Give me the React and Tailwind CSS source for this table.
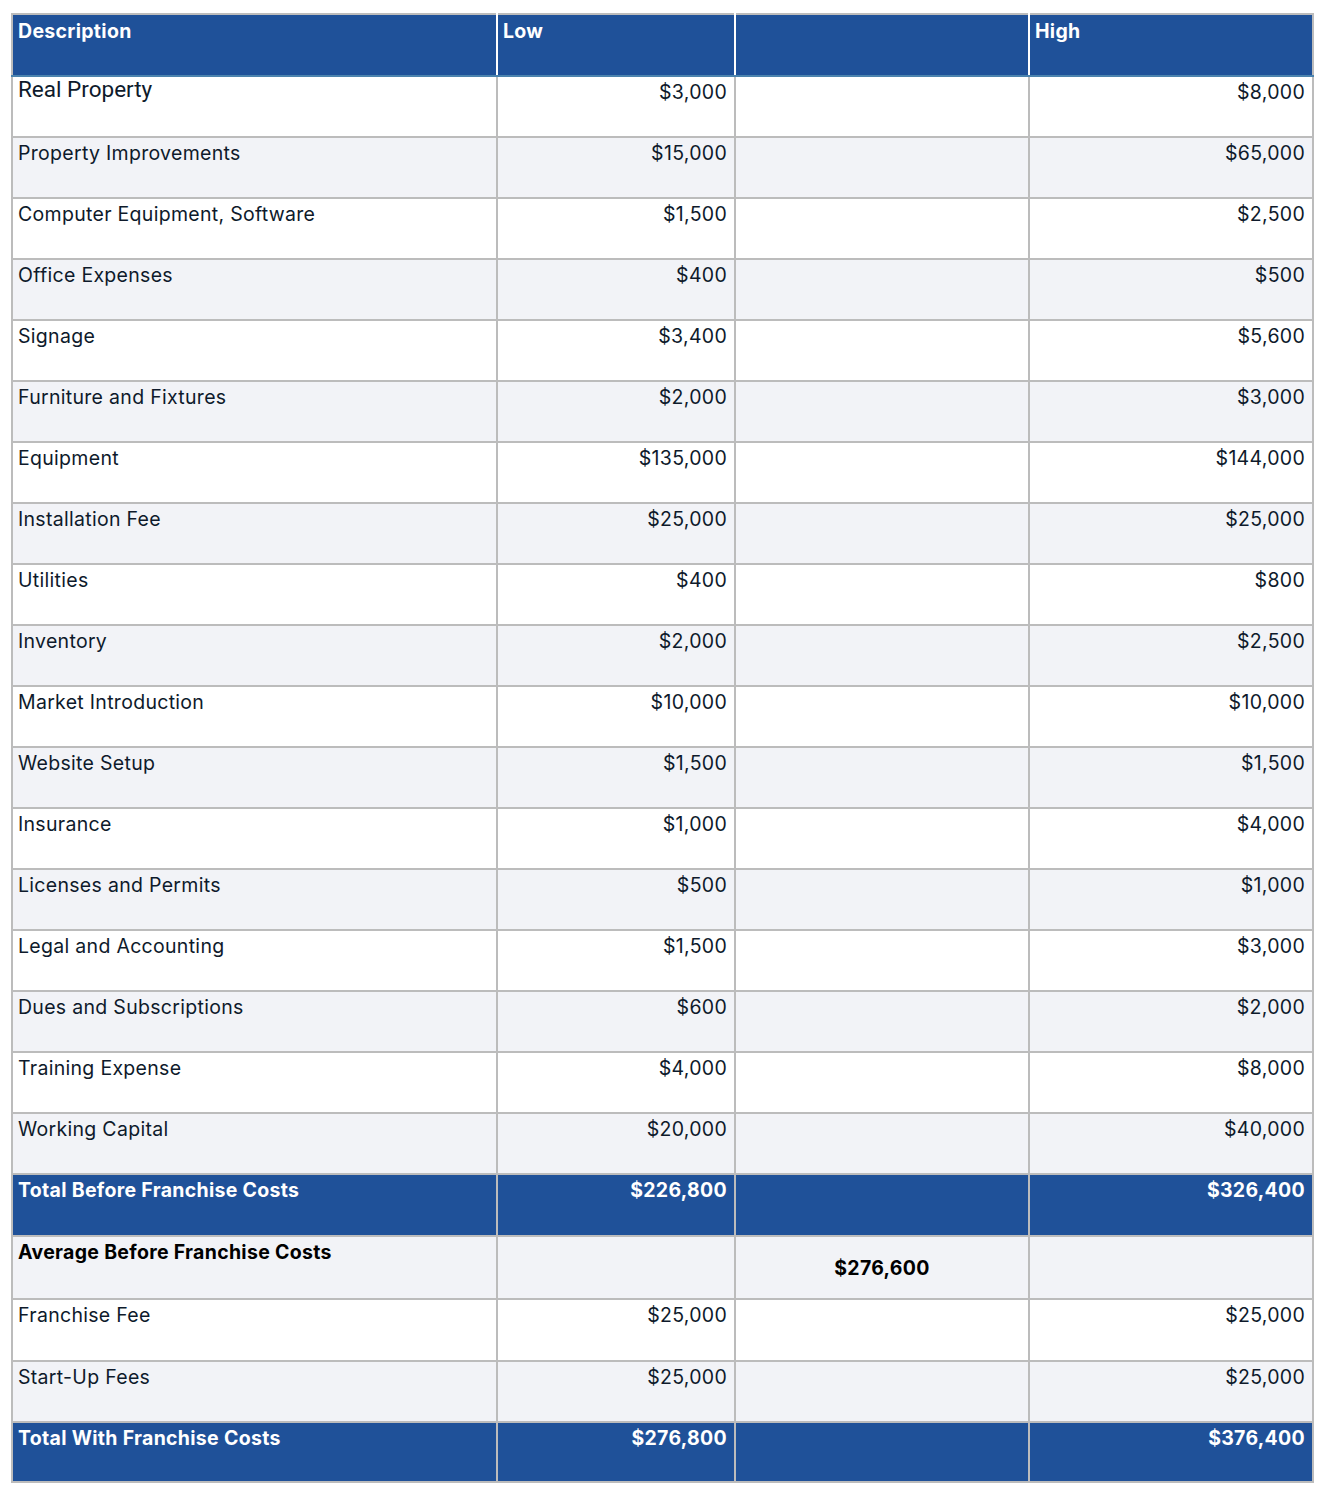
const rows = [
  ['Real Property', '$3,000', '$8,000'],
  ['Property Improvements', '$15,000', '$65,000'],
  ['Computer Equipment, Software', '$1,500', '$2,500'],
  ['Office Expenses', '$400', '$500'],
  ['Signage', '$3,400', '$5,600'],
  ['Furniture and Fixtures', '$2,000', '$3,000'],
  ['Equipment', '$135,000', '$144,000'],
  ['Installation Fee', '$25,000', '$25,000'],
  ['Utilities', '$400', '$800'],
  ['Inventory', '$2,000', '$2,500'],
  ['Market Introduction', '$10,000', '$10,000'],
  ['Website Setup', '$1,500', '$1,500'],
  ['Insurance', '$1,000', '$4,000'],
  ['Licenses and Permits', '$500', '$1,000'],
  ['Legal and Accounting', '$1,500', '$3,000'],
  ['Dues and Subscriptions', '$600', '$2,000'],
  ['Training Expense', '$4,000', '$8,000'],
  ['Working Capital', '$20,000', '$40,000'],
]

const cell = 'border-2 border-[#bcbcbc] pl-[5px] pr-[7px] pt-[1px] align-top'
const head = 'h-[62px] border-2 border-[#bcbcbc] border-b-[#4b83ae] px-[5px] pt-[2px] text-left align-top font-bold'

function Row({ h, bg, bold, label, low, high }) {
  return (
    <tr className={`${h} ${bg} ${bold ? 'font-bold text-white' : ''}`}>
      <td className={cell}>{label}</td>
      <td className={`${cell} text-right`}>{low}</td>
      <td className={cell}></td>
      <td className={`${cell} text-right`}>{high}</td>
    </tr>
  )
}

export default function App() {
  return (
    <div className="min-h-screen bg-white pl-[11px] pt-[13px]" style={{ fontFamily: 'Inter, Lato, sans-serif' }}>
      <table className="w-[1301px] table-fixed border-collapse text-[19.5px] leading-[28px] tracking-[0.3px] text-[#0e1a2b]">
        <colgroup>
          <col className="w-[485px]" />
          <col className="w-[238px]" />
          <col className="w-[294px]" />
          <col className="w-[284px]" />
        </colgroup>
        <thead>
          <tr className="bg-[#1f5199] text-white">
            <th className={`${head} border-r-white`}>Description</th>
            <th className={`${head} border-x-white`}>Low</th>
            <th className={`${head} border-x-white`}></th>
            <th className={`${head} border-l-white`}>High</th>
          </tr>
        </thead>
        <tbody>
          {rows.map(([label, low, high], i) => (
            <tr key={label} className={`h-[61px] ${i % 2 ? 'bg-[#f2f3f7]' : 'bg-white'}`}>
              {i === 0 ? (
                <td className={`${cell} pt-0 text-[22.5px] leading-[23px] tracking-normal`} style={{ fontFamily: 'Roboto, sans-serif' }}>{label}</td>
              ) : (
                <td className={cell}>{label}</td>
              )}
              <td className={`${cell} text-right`}>{low}</td>
              <td className={cell}></td>
              <td className={`${cell} text-right`}>{high}</td>
            </tr>
          ))}
          <Row h="h-[62px]" bg="bg-[#1f5199]" bold label="Total Before Franchise Costs" low="$226,800" high="$326,400" />
          <tr className="h-[63px] bg-[#f2f3f7] font-bold text-black">
            <td className={cell}>Average Before Franchise Costs</td>
            <td className={cell}></td>
            <td className="border-2 border-[#bcbcbc] px-[5px] text-center align-middle">$276,600</td>
            <td className={cell}></td>
          </tr>
          <Row h="h-[62px]" bg="bg-white" label="Franchise Fee" low="$25,000" high="$25,000" />
          <Row h="h-[61px]" bg="bg-[#f2f3f7]" label="Start-Up Fees" low="$25,000" high="$25,000" />
          <Row h="h-[60px]" bg="bg-[#1f5199]" bold label="Total With Franchise Costs" low="$276,800" high="$376,400" />
        </tbody>
      </table>
    </div>
  )
}
